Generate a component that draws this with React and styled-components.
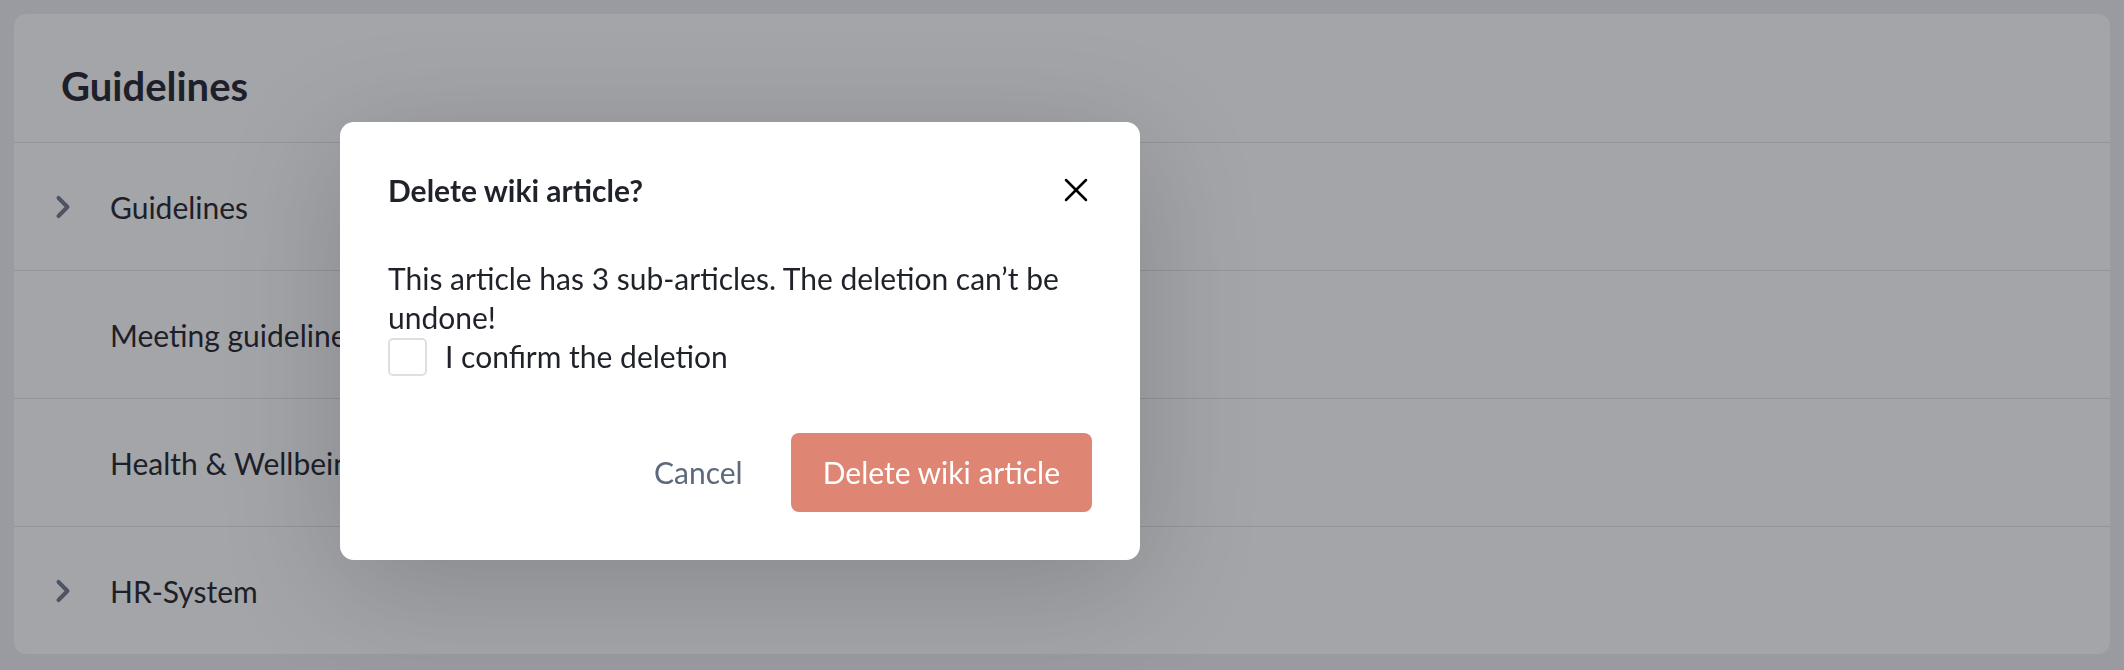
import React, { useState } from "react";
import styled, { createGlobalStyle } from "styled-components";
import { ChevronRight, X } from "lucide-react";

const GlobalStyle = createGlobalStyle`
  * {
    box-sizing: border-box;
  }
  body {
    margin: 0;
    background: #eeeff1;
    font-family: Lato, "Noto Sans", sans-serif;
    color: #1f2229;
  }
`;

const articles = [
  { title: "Guidelines", children: true },
  { title: "Meeting guidelines", children: false },
  { title: "Health & Wellbeing", children: false },
  { title: "HR-System", children: true },
];

const App = () => {
  const [confirmed, setConfirmed] = useState(false);

  return (
    <>
      <GlobalStyle />
      <Page>
        <Card>
          <CardHeader>
            <h1>Guidelines</h1>
          </CardHeader>
          {articles.map((item) => (
            <Row key={item.title}>
              <Toggle>
                {item.children && <ChevronRight size={36} strokeWidth={2.7} />}
              </Toggle>
              <span>{item.title}</span>
            </Row>
          ))}
        </Card>
      </Page>
      <Overlay />
      <Dialog>
        <DialogHeader>
          <h2>Delete wiki article?</h2>
          <CloseButton>
            <X size={40} strokeWidth={1.5} />
          </CloseButton>
        </DialogHeader>
        <Message>
          This article has 3 sub-articles. The deletion can’t be undone!
        </Message>
        <Confirm>
          <Checkbox
            type="checkbox"
            checked={confirmed}
            onChange={(e) => setConfirmed(e.target.checked)}
          />
          I confirm the deletion
        </Confirm>
        <Footer>
          <CancelButton>Cancel</CancelButton>
          <DangerButton>Delete wiki article</DangerButton>
        </Footer>
      </Dialog>
    </>
  );
};

export default App;

const Page = styled.div`
  min-height: 100vh;
  padding: 14px;
`;

const Card = styled.div`
  background: #ffffff;
  border-radius: 12px;
  overflow: hidden;
  height: 640px;
`;

const CardHeader = styled.div`
  height: 129px;
  padding: 48px 47px 0;
  border-bottom: 1px solid #e3e3e5;
  & > h1 {
    margin: 0;
    font-size: 40px;
    font-weight: 700;
    line-height: 1.2;
  }
`;

const Row = styled.div`
  display: flex;
  align-items: center;
  height: 128px;
  padding-left: 31px;
  font-size: 30px;
  line-height: 1.2;
  border-bottom: 1px solid #e3e3e5;
  &:last-child {
    border-bottom: none;
  }
  & > span {
    margin-left: 29px;
  }
`;

const Toggle = styled.div`
  width: 36px;
  height: 36px;
  color: #6e7a8a;
  display: flex;
`;

const Overlay = styled.div`
  position: fixed;
  inset: 0;
  background: rgba(28, 30, 40, 0.4);
`;

const Dialog = styled.div`
  position: absolute;
  left: 340px;
  top: 122px;
  width: 800px;
  padding: 48px;
  background: #ffffff;
  border-radius: 14px;
  box-shadow: 0 24px 120px rgba(0, 0, 0, 0.18);
`;

const DialogHeader = styled.div`
  display: flex;
  align-items: center;
  justify-content: space-between;
  height: 40px;
  & > h2 {
    margin: 0;
    font-size: 30px;
    font-weight: 700;
    line-height: 1.2;
  }
`;

const CloseButton = styled.button`
  border: none;
  background: none;
  padding: 0;
  width: 40px;
  height: 40px;
  margin-right: -4px;
  color: #000000;
  display: flex;
  cursor: pointer;
`;

const Message = styled.p`
  margin: 49px 0 0;
  font-size: 30px;
  line-height: 39px;
`;

const Confirm = styled.label`
  display: flex;
  align-items: center;
  gap: 18px;
  font-size: 30px;
  line-height: 39px;
`;

const Checkbox = styled.input`
  appearance: none;
  margin: 0;
  width: 39px;
  height: 38px;
  border: 2px solid #dcdfe3;
  border-radius: 5px;
  background: #ffffff;
`;

const Footer = styled.div`
  display: flex;
  justify-content: flex-end;
  align-items: center;
  gap: 48px;
  margin-top: 57px;
`;

const CancelButton = styled.button`
  border: none;
  background: none;
  padding: 0;
  font-family: inherit;
  font-size: 30px;
  line-height: 39px;
  color: #5d6a7c;
  cursor: pointer;
`;

const DangerButton = styled.button`
  border: none;
  border-radius: 8px;
  padding: 20px 32px;
  font-family: inherit;
  font-size: 30px;
  line-height: 39px;
  color: #ffffff;
  background: #de8573;
  cursor: pointer;
`;
